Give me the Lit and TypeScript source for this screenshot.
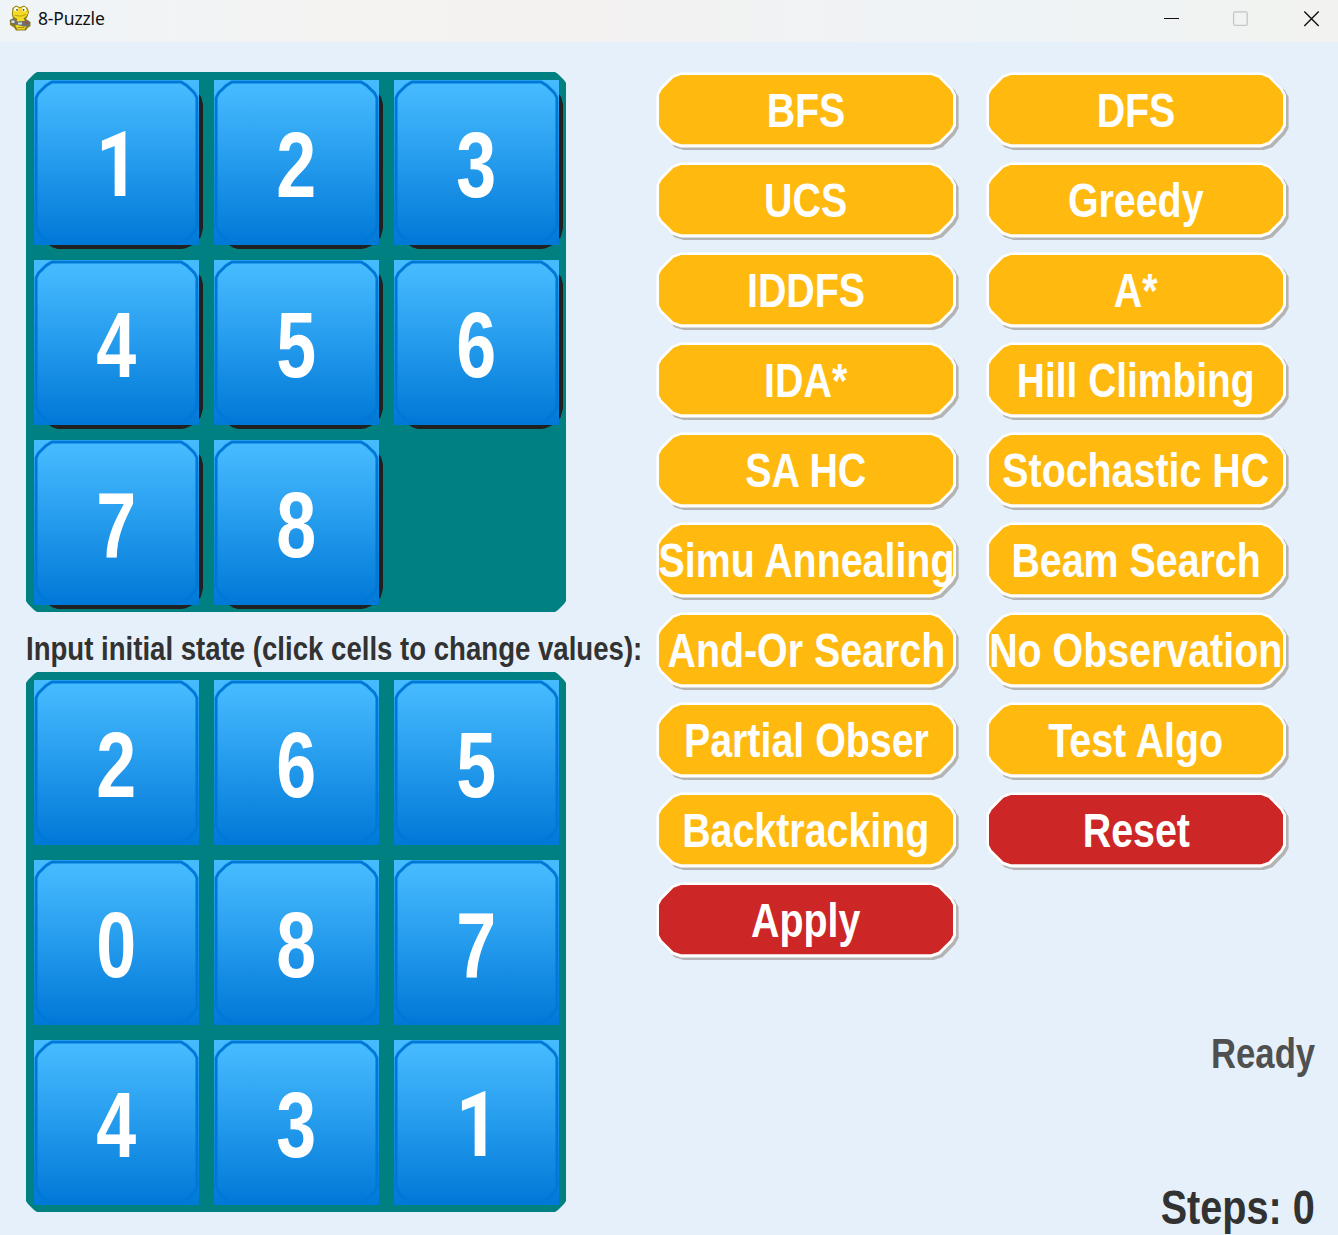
import { LitElement, html, css, svg } from "lit";
import { customElement, property } from "lit/decorators.js";
import { classMap } from "lit/directives/class-map.js";

@customElement("puzzle-tile")
class PuzzleTile extends LitElement {
  static styles = css`
    :host { display: grid; width: 165px; height: 165px; place-items: center; }
    .art, .digit { grid-area: 1 / 1; }
    .art { width: 165px; height: 165px; overflow: visible; display: block; }
    .digit {
      font: bold 92px/100px "Liberation Sans", Arial, sans-serif;
      color: #fff; transform: translate(0.5px, 2.5px) scaleX(0.78);
    }
    .digit.one {
      font-family: Roboto, "Liberation Sans", sans-serif; font-size: 90px;
      transform: translate(1.5px, 3.5px) scaleX(0.84);
    }
  `;
  @property({ type: Number }) value = 0;
  @property({ type: Boolean }) raised = false;

  render() {
    return html`
      <svg class="art" viewBox="0 0 165.4 165.4">
        <defs>
          <linearGradient id="face" x1="0" y1="0" x2="0" y2="1">
            <stop offset="0" stop-color="#46bcff" />
            <stop offset="0.08" stop-color="#43b8fe" />
            <stop offset="1" stop-color="#0078d7" />
          </linearGradient>
        </defs>
        ${this.raised
          ? svg`<path fill="#202020" d="M160 14H165.4L167.5 17L169.4 24V149L167 158L158.5 165.6L152 168.6L148 169.4H24L19 168L15 165.4H10V150Z" />`
          : null}
        <rect width="165.4" height="165.4" fill="url(#face)" />
        <path fill="none" stroke="#0078d7" stroke-width="2.9"
          d="M2.1 18L4.6 13L12.3 5.4L18 2H147.4L153.1 5.4L160.8 13L163.3 18V147L160.8 152.4L153.1 160L147.4 163.4H18L12.3 160L4.6 152.4L2.1 147Z" />
      </svg>
      <span class=${classMap({ digit: true, one: this.value === 1 })}>${this.value}</span>
    `;
  }
}

@customElement("puzzle-board")
class PuzzleBoard extends LitElement {
  static styles = css`
    :host { display: block; }
    .board {
      box-sizing: border-box; width: 540px; height: 540px; padding: 7.5px;
      display: grid; grid-template-columns: repeat(3, 165px); grid-auto-rows: 165px; gap: 15px;
      background: #008080;
      clip-path: polygon(0 11px, 2px 8px, 8px 2px, 11px 0, calc(100% - 11px) 0, calc(100% - 8px) 2px,
        calc(100% - 2px) 8px, 100% 11px, 100% calc(100% - 11px), calc(100% - 2px) calc(100% - 8px),
        calc(100% - 8px) calc(100% - 2px), calc(100% - 11px) 100%, 11px 100%, 8px calc(100% - 2px),
        2px calc(100% - 8px), 0 calc(100% - 11px));
    }
  `;
  @property({ attribute: false }) cells: (number | null)[] = [];
  @property({ type: Boolean }) raised = false;

  render() {
    return html`<div class="board">
      ${this.cells.map((v) =>
        v === null ? html`<span></span>` : html`<puzzle-tile .value=${v} .raised=${this.raised}></puzzle-tile>`
      )}
    </div>`;
  }
}

@customElement("algo-button")
class AlgoButton extends LitElement {
  static styles = css`
    :host { display: block; }
    .button {
      display: grid; grid-template-columns: 300px; place-items: center; width: 300px; height: 76px;
      padding: 0; border: 0; background: none; cursor: pointer;
    }
    .art, .label { grid-area: 1 / 1; }
    .art { width: 300px; height: 76px; overflow: visible; display: block; }
    .fill { fill: #ffb90f; }
    .fill.danger { fill: #cd2626; }
    .label {
      font: bold 48px/60px "Liberation Sans", Arial, sans-serif; z-index: 1;
      color: #fff; white-space: nowrap; transform: translate(0, 1px) scaleX(0.82);
    }
    .label.tight { transform: translate(0, 1px) scaleX(0.81); }
  `;
  @property() label = "";
  @property({ type: Boolean }) danger = false;
  @property({ type: Boolean }) tight = false;

  render() {
    const outer =
      "M0.5 22.5L3.6 16L16 3.4L25 0.5H275L284 3.4L296.4 16L300 22.5V53.5L296.4 60L284 72.6L275 75.5H25L16 72.6L3.6 60L0.5 53.5Z";
    return html`<button class="button">
      <svg class="art" viewBox="0 0 300 76">
        <path fill="#b4b4b4" transform="translate(2.6 2.6)" d=${outer} />
        <path fill="#fff" d=${outer} />
        <path class="fill ${this.danger ? "danger" : ""}"
          d="M3 23L5.6 18L17.5 5.8L25 3H275L282.5 5.8L294.4 18L297 23V53L294.4 58L282.5 69.8L275 72.3H25L17.5 69.8L5.6 58L3 53Z" />
      </svg>
      <span class=${classMap({ label: true, tight: this.tight })}>${this.label}</span>
    </button>`;
  }
}

@customElement("app-root")
class AppRoot extends LitElement {
  static styles = css`
    :host { display: block; }
    .window {
      box-sizing: border-box; width: 1338px; height: 1235px; overflow: hidden;
      background: #e6f0fa; display: flex; flex-direction: column;
      font-family: "Liberation Sans", Arial, sans-serif;
    }
    .titlebar {
      flex: none; height: 42px; display: flex; align-items: flex-start;
      background: linear-gradient(90deg, #eff4f8 0, #f4f3f2 25%, #f4f2f1 42%, #eef3f6 75%, #f2f3f0 100%);
    }
    .logo { width: 24px; height: 26px; margin: 5px 0 0 9px; }
    .title { font: 17.5px/24px "Noto Sans", sans-serif; color: #111; margin: 6px 0 0 5px; letter-spacing: -0.15px; }
    .controls { width: 156px; height: 16px; margin: 11px 18px 0 auto; }
    .content { flex: 1; display: flex; align-items: stretch; padding: 30px 0 0 26px; }
    .boards { width: 630px; flex: none; }
    .prompt {
      height: 60px; display: flex; align-items: center; white-space: nowrap;
      font: bold 33.5px/40px "Liberation Sans", Arial, sans-serif; color: #323232;
    }
    .prompt span { transform: scaleX(0.8235); transform-origin: left; margin-top: 13px; }
    .side { width: 659px; display: flex; flex-direction: column; }
    .buttons { display: grid; grid-template-columns: 300px 300px; column-gap: 30px; row-gap: 14px; }
    .status {
      margin: 71px 0 0; align-self: flex-end; font-size: 42px; line-height: 50px; font-weight: bold;
      color: #505050; transform: scaleX(0.825); transform-origin: right;
    }
    .steps {
      margin: 101px 0 0; align-self: flex-end; font-size: 48px; line-height: 56px; font-weight: bold;
      color: #323232; transform: scaleX(0.825); transform-origin: right;
    }
  `;

  private algorithms = [
    "BFS", "DFS", "UCS", "Greedy", "IDDFS", "A*", "IDA*", "Hill Climbing", "SA HC", "Stochastic HC",
    "Simu Annealing", "Beam Search", "And-Or Search", "No Observation", "Partial Obser", "Test Algo",
    "Backtracking",
  ];
  private tightLabels = new Set(["Hill Climbing"]);

  render() {
    return html`
      <div class="window">
        <header class="titlebar">
          <svg class="logo" viewBox="0 0 24 26">
            <path fill="#8f7d12" d="M3.5 3L7 0.5L11 2.2L15 0.5L18.5 3L20 7L18.5 11.5L17 14L21.5 17V21L18.5 23L17 25.5H7L5 22.5L1 20L0.7 15L4 13.5L2.8 9Z" />
            <path fill="#f2da25" d="M4.3 4L7.5 1.5L11 3.3L15 1.5L17.8 4L19.2 7.5L17.5 11L14.5 13.5L16.5 17L17.5 21L15.5 24.5H8.5L6.5 21L7 17L8.5 14L4.8 12L3.7 8.5Z" />
            <ellipse cx="7.2" cy="4.3" rx="2" ry="2.2" fill="#fff" />
            <ellipse cx="15.2" cy="4.3" rx="2" ry="2.2" fill="#fff" />
            <circle cx="8" cy="4.8" r="0.9" fill="#333" />
            <circle cx="14.6" cy="4.8" r="0.9" fill="#333" />
            <path stroke="#b79d0d" fill="none" d="M6 10.4Q12 12.5 17 9.4" />
            <path fill="#6d706e" d="M1 15L5 14L9 16.5L19 15.5L21.3 18L20 21L15 21.5L8 20L2 19Z" />
            <path fill="#d8dcda" d="M2.4 15.5H5.5V18H2.4ZM9 17.5H13V19.6H9Z" />
            <path fill="#c43b2d" d="M16.8 16.6H18.8V18.6H16.8Z" />
            <path stroke="#a58d0a" fill="none" d="M8.5 22.6H15.5" />
          </svg>
          <span class="title">8-Puzzle</span>
          <svg class="controls" viewBox="0 0 156 16">
            <path d="M0 7.5H15" stroke="#111" />
            <rect x="69.6" y="0.8" width="13.6" height="13.6" rx="1.5" fill="none" stroke="#c2c6c6" stroke-width="1.3" />
            <path d="M140.3 0.5L154.7 14.9M154.7 0.5L140.3 14.9" stroke="#111" stroke-width="1.4" />
          </svg>
        </header>
        <main class="content">
          <section class="boards">
            <puzzle-board raised .cells=${[1, 2, 3, 4, 5, 6, 7, 8, null]}></puzzle-board>
            <div class="prompt"><span>Input initial state (click cells to change values):</span></div>
            <puzzle-board .cells=${[2, 6, 5, 0, 8, 7, 4, 3, 1]}></puzzle-board>
          </section>
          <section class="side">
            <div class="buttons">
              ${this.algorithms.map(
                (a) => html`<algo-button .label=${a} .tight=${this.tightLabels.has(a)}></algo-button>`
              )}
              <algo-button danger label="Reset"></algo-button>
              <algo-button danger label="Apply"></algo-button>
            </div>
            <p class="status">Ready</p>
            <p class="steps">Steps: 0</p>
          </section>
        </main>
      </div>
    `;
  }
}
